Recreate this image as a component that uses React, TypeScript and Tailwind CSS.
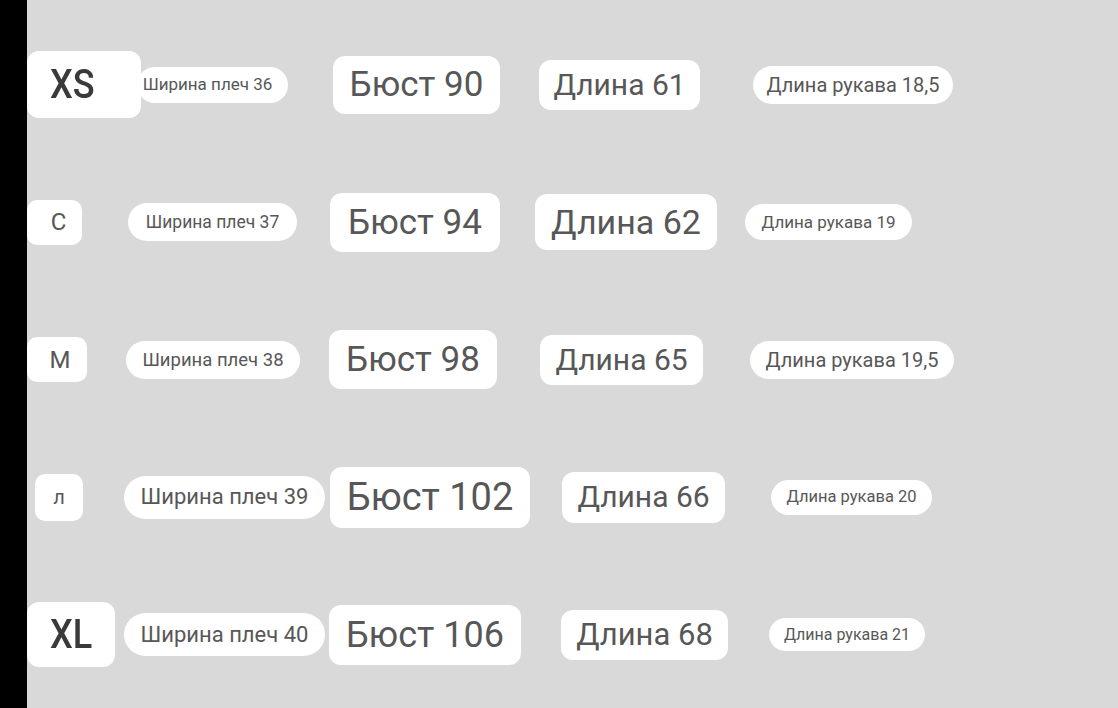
import React from "react";

type Pill = {
  label: string;
  className: string;
  text?: string;
};

const rows: Pill[][] = [
  [
    {
      label: "XS",
      className: "w-[114px] h-[67px] rounded-[12px] justify-start pl-[23px]",
      text: "text-[41px] font-medium text-[#3a3a3a] blur-[0.5px] scale-x-[0.88] origin-left",
    },
    { label: "Ширина плеч 36", className: "ml-[-4px] w-[151px] h-[36px] rounded-full text-[17px] pr-[10px]" },
    { label: "Бюст 90", className: "ml-[45px] w-[167px] h-[58px] rounded-[12px] text-[35px]" },
    { label: "Длина 61", className: "ml-[39px] w-[161px] h-[50px] rounded-[12px] text-[30px]" },
    { label: "Длина рукава 18,5", className: "ml-[53px] w-[200px] h-[38px] rounded-full text-[20px]" },
  ],
  [
    { label: "C", className: "w-[55px] h-[45px] rounded-[10px] text-[24px] pl-[8px]" },
    { label: "Ширина плеч 37", className: "ml-[46px] w-[169px] h-[38px] rounded-full text-[17.5px]" },
    { label: "Бюст 94", className: "ml-[33px] w-[170px] h-[59px] rounded-[12px] text-[35px]" },
    { label: "Длина 62", className: "ml-[35px] w-[182px] h-[56px] rounded-[12px] text-[34px]" },
    { label: "Длина рукава 19", className: "ml-[28px] w-[167px] h-[36px] rounded-full text-[17px]" },
  ],
  [
    { label: "M", className: "w-[60px] h-[45px] rounded-[10px] text-[24px] pl-[6px]" },
    { label: "Ширина плеч 38", className: "ml-[39px] w-[174px] h-[38px] rounded-full text-[18.5px]" },
    { label: "Бюст 98", className: "ml-[29px] w-[168px] h-[59px] rounded-[12px] text-[35px]" },
    { label: "Длина 65", className: "ml-[43px] w-[163px] h-[50px] rounded-[12px] text-[30px]" },
    { label: "Длина рукава 19,5", className: "ml-[47px] w-[204px] h-[38px] rounded-full text-[20px]" },
  ],
  [
    { label: "л", className: "ml-[8px] w-[48px] h-[47px] rounded-[10px] text-[20px]" },
    { label: "Ширина плеч 39", className: "ml-[41px] w-[201px] h-[43px] rounded-full text-[22px]" },
    { label: "Бюст 102", className: "ml-[5px] w-[200px] h-[61px] rounded-[12px] text-[38px]" },
    { label: "Длина 66", className: "ml-[32px] w-[163px] h-[51px] rounded-[12px] text-[30px]" },
    { label: "Длина рукава 20", className: "ml-[46px] w-[161px] h-[35px] rounded-full text-[16.5px]" },
  ],
  [
    {
      label: "XL",
      className: "w-[88px] h-[65px] rounded-[12px]",
      text: "text-[41px] font-medium text-[#3a3a3a] blur-[0.5px] scale-x-[0.88]",
    },
    { label: "Ширина плеч 40", className: "ml-[9px] w-[201px] h-[43px] rounded-full text-[22px]" },
    { label: "Бюст 106", className: "ml-[4px] w-[192px] h-[60px] rounded-[12px] text-[36px]" },
    { label: "Длина 68", className: "ml-[40px] w-[167px] h-[50px] rounded-[12px] text-[31px]" },
    { label: "Длина рукава 21", className: "ml-[41px] w-[156px] h-[33px] rounded-full text-[16px]" },
  ],
];

const App = () => {
  return (
    <div className="flex w-[1118px] h-[708px] overflow-hidden font-['Roboto',sans-serif]">
      <div className="w-[27px] shrink-0 bg-black" />
      <div className="flex-1 bg-[#d9d9d9] pt-[16px]">
        {rows.map((row, i) => (
          <div key={i} className="flex items-center h-[137.5px]">
            {row.map((pill, j) => (
              <div
                key={j}
                className={`flex items-center justify-center shrink-0 bg-white text-[#575757] leading-none whitespace-nowrap ${pill.className}`}
              >
                <span className={`block ${pill.text ?? ""}`}>{pill.label}</span>
              </div>
            ))}
          </div>
        ))}
      </div>
    </div>
  );
};

export default App;
